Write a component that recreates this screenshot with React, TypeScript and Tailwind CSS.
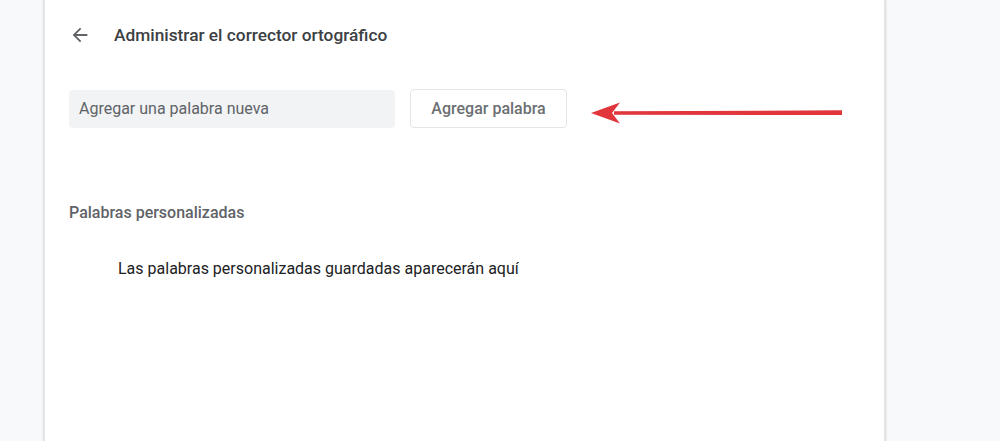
import React from "react";

export default function App() {
  return (
    <div
      className="w-[1000px] h-[441px] bg-[#f8f9fa] overflow-hidden flex"
      style={{ fontFamily: "Roboto, 'Liberation Sans', sans-serif" }}
    >
      <div className="w-[43px] shrink-0" />
      <div className="w-[843px] h-full bg-white border-x-2 border-[#e3e4e6] shadow-[0_0_2px_rgba(60,64,67,0.15)] flex flex-col">
        <div className="h-[70px] flex items-center pl-[24px]">
          <svg width="22" height="22" viewBox="0 0 24 24" className="text-[#5f6368]">
            <path d="M20 11H7.83l5.59-5.59L12 4l-8 8 8 8 1.41-1.41L7.83 13H20v-2z" fill="currentColor" />
          </svg>
          <span className="ml-[23px] text-[17.3px] leading-[24px] font-medium text-[#3c4043]">
            Administrar el corrector ortográfico
          </span>
        </div>
        <div className="flex items-center pl-[24px] mt-[19px] gap-[15px]">
          <div className="w-[326px] h-[38px] rounded-[4px] bg-[#f1f3f4] flex items-center pl-[10px] text-[16px] text-[#5f6368]">
            Agregar una palabra nueva
          </div>
          <div className="w-[157px] h-[39px] rounded-[4px] border border-[#e3e5e8] bg-white flex items-center justify-center text-[16px] font-medium text-[#6b6f73]">
            Agregar palabra
          </div>
          <svg width="260" height="30" viewBox="0 0 260 30" className="ml-[4px] mt-[9px]">
            <path d="M28 13.3 L256 12.3 L256 17 L28 16.7 Z" fill="#e0363c" />
            <path d="M5 15 L34 4.5 L26 15 L34 25.5 Z" fill="#e0363c" />
          </svg>
        </div>
        <div className="pl-[24px] mt-[73px] text-[16px] leading-[24px] font-medium text-[#5f6368]">
          Palabras personalizadas
        </div>
        <div className="pl-[73px] mt-[32px] text-[16px] leading-[24px] text-[#202124]">
          Las palabras personalizadas guardadas aparecerán aquí
        </div>
      </div>
    </div>
  );
}
